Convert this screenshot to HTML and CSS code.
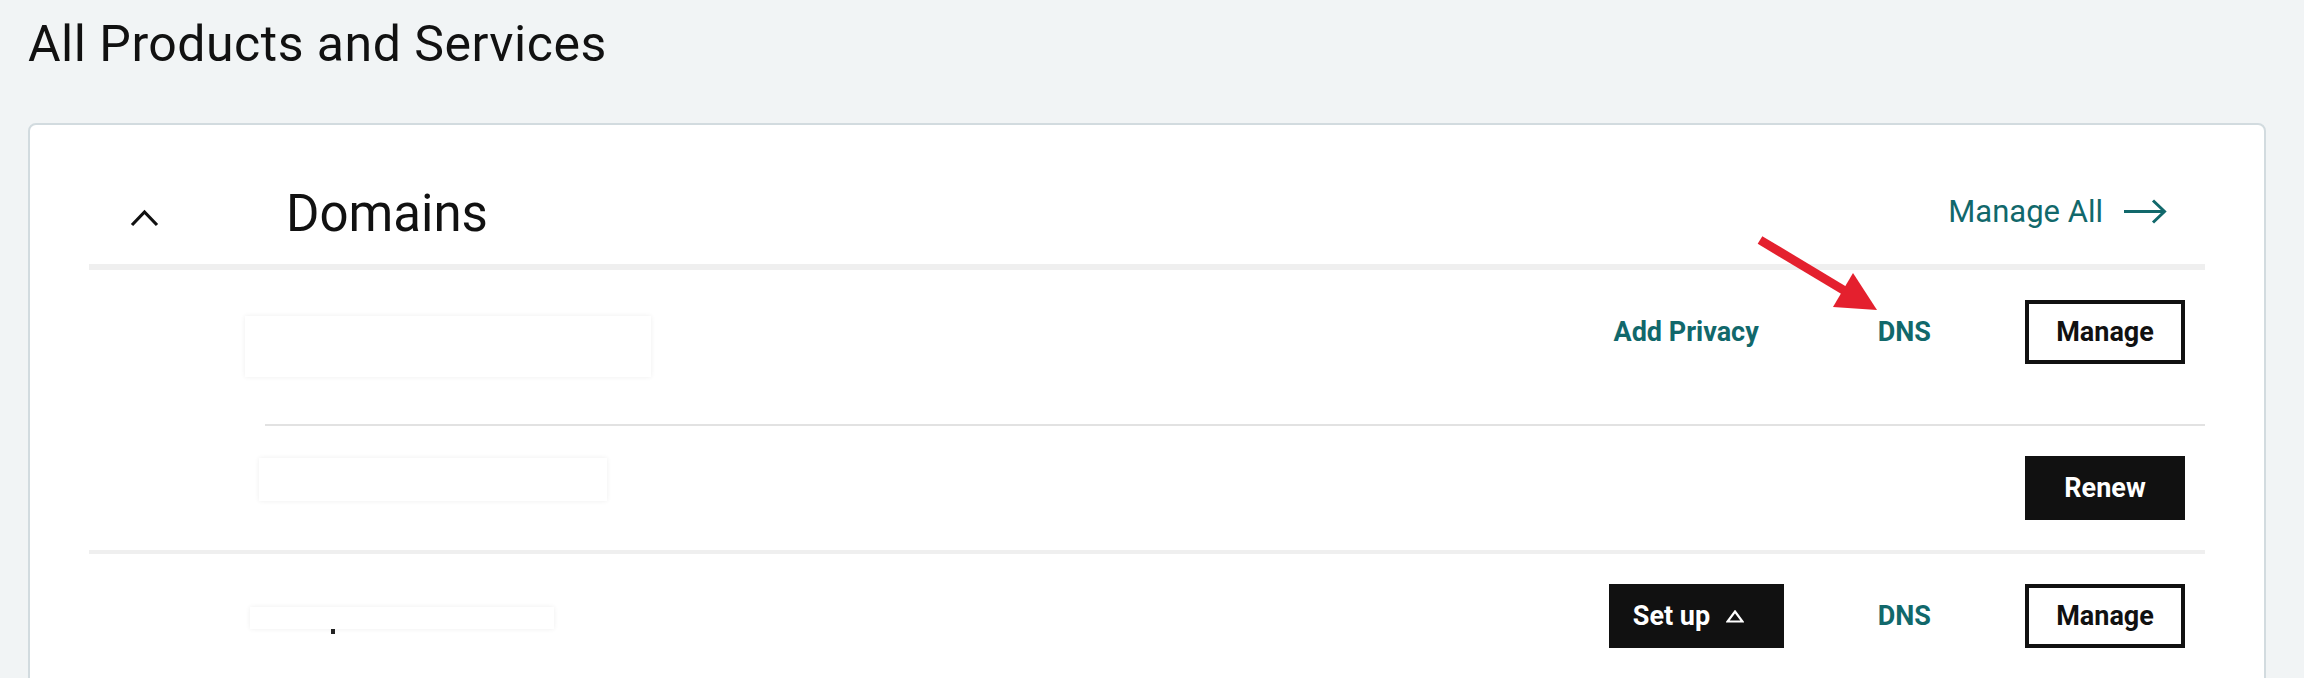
FILE: index.html
```html
<!DOCTYPE html>
<html lang="en">
<head>
    <meta charset="UTF-8">
    <meta name="viewport" content="width=device-width, initial-scale=1.0">
    <title>All Products and Services</title>
    <link rel="stylesheet" href="styles.css">
</head>
<body>
    <div class="page">
        <h1 class="page-title">All Products and Services</h1>

        <section class="card">
            <header class="card-head">
                <span class="toggle">
                    <svg width="29" height="18" viewBox="0 0 29 18">
                        <polyline points="2,16 14.5,3 27,16" fill="none" stroke="#111" stroke-width="3.2"/>
                    </svg>
                </span>
                <h2 class="card-title">Domains</h2>
                <a class="manage-all" href="#">
                    Manage All
                    <svg width="43" height="25" viewBox="0 0 43 25">
                        <line x1="0" y1="12.5" x2="40" y2="12.5" stroke="#11686b" stroke-width="3"/>
                        <polyline points="29,1.5 40.5,12.5 29,23.5" fill="none" stroke="#11686b" stroke-width="3"/>
                    </svg>
                </a>
            </header>

            <div class="domain">
                <div class="domain-row row-main">
                    <div class="domain-name"><span class="mask mask-lg"></span></div>
                    <div class="actions">
                        <a class="link link-privacy" href="#">Add Privacy</a>
                        <a class="link" href="#">DNS</a>
                        <button class="btn btn-outline">Manage</button>
                    </div>
                </div>
                <div class="sub-divider"></div>
                <div class="domain-row row-sub">
                    <div class="domain-name"><span class="mask mask-md"></span></div>
                    <div class="actions">
                        <button class="btn btn-solid">Renew</button>
                    </div>
                </div>
            </div>

            <div class="domain">
                <div class="domain-row row-last">
                    <div class="domain-name">
                        <span class="mask mask-sm"></span>
                        <span class="peek"></span>
                    </div>
                    <div class="actions">
                        <button class="btn btn-solid btn-setup">
                            Set up
                            <svg width="18" height="13" viewBox="0 0 18 13">
                                <polygon points="9,1.5 16.5,11.5 1.5,11.5" fill="none" stroke="#fff" stroke-width="2.2"/>
                            </svg>
                        </button>
                        <a class="link" href="#">DNS</a>
                        <button class="btn btn-outline">Manage</button>
                    </div>
                </div>
            </div>
        </section>
    </div>

    <!-- red callout pointing at DNS -->
    <svg class="callout" width="140" height="90" viewBox="0 0 140 90">
        <line x1="10" y1="10" x2="95" y2="61" stroke="#e4202e" stroke-width="9"/>
        <polygon points="83,77 103,43 127,80" fill="#e4202e"/>
    </svg>
</body>
</html>
```

FILE: styles.css
```css
body {
    margin: 0;
    background-color: #f1f4f5;
    color: #111;
    font-family: Roboto, "Liberation Sans", sans-serif;
    height: 678px;
    overflow: hidden;
}
.page {
    padding: 0 38px 0 28px;
}
.page-title {
    margin: 0 0 49px;
    padding-top: 14px;
    font-size: 50px;
    line-height: 60px;
    font-weight: 400;
    letter-spacing: 0.5px;
}
.card {
    background-color: #fff;
    border: 2px solid #d2dbdf;
    border-radius: 8px;
    padding: 0 59px;
    min-height: 700px;
}
.card-head {
    display: flex;
    align-items: center;
    padding: 59px 0 20px;
    border-bottom: 6px solid #efefef;
}
.toggle {
    width: 197px;
    padding-left: 41px;
    box-sizing: border-box;
}
.toggle svg {
    display: block;
    margin-top: 8px;
}
.card-title {
    margin: 0;
    font-size: 51px;
    line-height: 60px;
    font-weight: 400;
}
.manage-all {
    margin-left: auto;
    margin-right: 38px;
    margin-bottom: 6px;
    display: flex;
    align-items: center;
    gap: 21px;
    font-size: 31px;
    color: #11686b;
    text-decoration: none;
}
.manage-all svg {
    display: block;
}
.domain {
    border-bottom: 4px solid #efefef;
}
.domain-row {
    display: flex;
    align-items: flex-start;
    box-sizing: border-box;
    padding: 30px 20px 0 0;
}
.row-main {
    height: 154px;
    padding-left: 156px;
}
.row-sub {
    height: 124px;
    padding-left: 170px;
}
.row-last {
    height: 160px;
    padding-left: 161px;
}
.sub-divider {
    margin-left: 176px;
    height: 2px;
    background-color: #e2e2e2;
}
.domain-name {
    flex: 1;
}
.mask {
    display: block;
    background-color: #fff;
    box-shadow: 0 0 5px rgba(0, 0, 0, 0.07);
}
.mask-lg {
    width: 406px;
    height: 61px;
    margin-top: 16px;
}
.mask-md {
    width: 348px;
    height: 43px;
    margin-top: 2px;
}
.mask-sm {
    width: 304px;
    height: 22px;
    margin-top: 23px;
}
.peek {
    display: block;
    width: 4px;
    height: 5px;
    margin-left: 81px;
    background-color: #222;
}
.actions {
    display: flex;
    align-items: center;
    gap: 94px;
}
.link {
    font-size: 27px;
    font-weight: 700;
    color: #11686b;
    text-decoration: none;
}
.link-privacy {
    margin-right: 25px;
}
.btn {
    width: 160px;
    height: 64px;
    box-sizing: border-box;
    display: flex;
    align-items: center;
    justify-content: center;
    padding: 0;
    font-family: inherit;
    font-size: 27px;
    font-weight: 700;
    cursor: pointer;
}
.btn-outline {
    background-color: #fff;
    color: #111;
    border: 4px solid #111;
}
.btn-solid {
    background-color: #111;
    color: #fff;
    border: none;
}
.btn-setup {
    width: 175px;
    justify-content: flex-start;
    padding-left: 24px;
    gap: 16px;
}
.btn-setup svg {
    display: block;
}
.callout {
    position: absolute;
    left: 1750px;
    top: 230px;
}
```
